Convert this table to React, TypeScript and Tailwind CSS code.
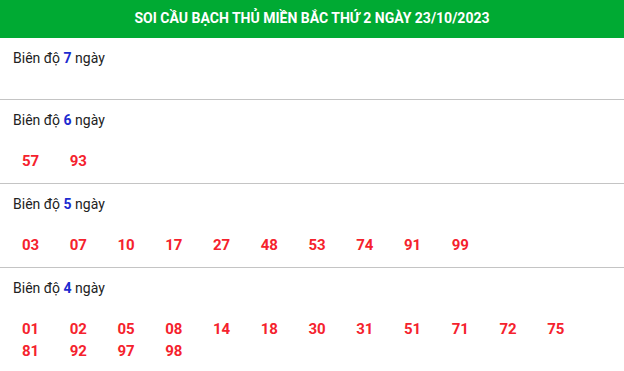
import React from "react";

const sections: { days: number; nums: string[] }[] = [
  { days: 7, nums: [] },
  { days: 6, nums: ["57", "93"] },
  { days: 5, nums: ["03", "07", "10", "17", "27", "48", "53", "74", "91", "99"] },
  {
    days: 4,
    nums: ["01", "02", "05", "08", "14", "18", "30", "31", "51", "71", "72", "75", "81", "92", "97", "98"],
  },
];

export default function App() {
  return (
    <div className="w-[624px] bg-white font-['Roboto',sans-serif]">
      <div className="h-[38px] bg-[#00aa33] flex items-center justify-center">
        <h2 className="text-white font-bold text-[14px] leading-none pb-[2px]">
          SOI CẦU BẠCH THỦ MIỀN BẮC THỨ 2 NGÀY 23/10/2023
        </h2>
      </div>
      {sections.map((s, i) => (
        <div
          key={s.days}
          className={`pt-[10px] pb-[11px] ${i < sections.length - 1 ? "border-b border-[#c4c4c4]" : ""}`}
        >
          <div className="pl-[13px] text-[14px] leading-[20px] text-[#222]">
            Biên độ <span className="font-bold text-[#1c2bd0]">{s.days}</span> ngày
          </div>
          <div className="mt-5 pl-[22px] flex flex-wrap">
            {s.nums.map((n) => (
              <span key={n} className="w-[47.75px] text-[15px] leading-[22px] font-bold text-[#f5222d]">
                {n}
              </span>
            ))}
          </div>
        </div>
      ))}
    </div>
  );
}
